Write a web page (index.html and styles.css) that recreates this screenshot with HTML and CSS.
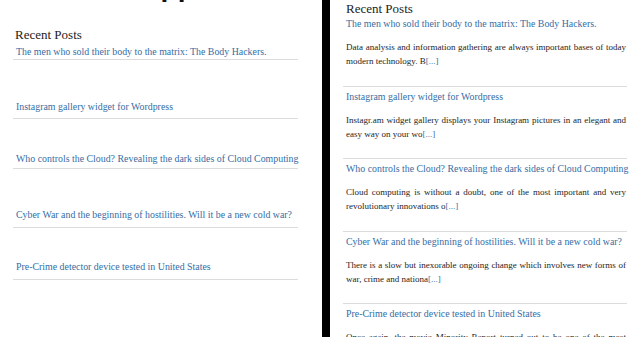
FILE: index.html
```html
<!DOCTYPE html>
<html>
<head>
<meta charset="utf-8">
<link rel="stylesheet" href="styles.css">
</head>
<body>
<div class="page">
  <section class="panel left">
    <h1 class="site-title">Web Apps</h1>
    <h2 class="widget-title">Recent Posts</h2>
    <ul class="posts compact">
      <li><a href="#">The men who sold their body to the matrix: The Body Hackers.</a></li>
      <li><a href="#">Instagram gallery widget for Wordpress</a></li>
      <li><a href="#">Who controls the Cloud? Revealing the dark sides of Cloud Computing</a></li>
      <li><a href="#">Cyber War and the beginning of hostilities. Will it be a new cold war?</a></li>
      <li><a href="#">Pre-Crime detector device tested in United States</a></li>
    </ul>
  </section>
  <div class="divider"></div>
  <section class="panel right">
    <h2 class="widget-title">Recent Posts</h2>
    <ul class="posts full">
      <li>
        <a href="#">The men who sold their body to the matrix: The Body Hackers.</a>
        <p class="excerpt">Data analysis and information gathering are always important bases of today modern technology. B<a href="#">[...]</a></p>
      </li>
      <li>
        <a href="#">Instagram gallery widget for Wordpress</a>
        <p class="excerpt">Instagr.am widget gallery displays your Instagram pictures in an elegant and easy way on your wo<a href="#">[...]</a></p>
      </li>
      <li>
        <a href="#">Who controls the Cloud? Revealing the dark sides of Cloud Computing</a>
        <p class="excerpt">Cloud computing is without a doubt, one of the most important and very revolutionary innovations o<a href="#">[...]</a></p>
      </li>
      <li>
        <a href="#">Cyber War and the beginning of hostilities. Will it be a new cold war?</a>
        <p class="excerpt">There is a slow but inexorable ongoing change which involves new forms of war, crime and nationa<a href="#">[...]</a></p>
      </li>
      <li>
        <a href="#">Pre-Crime detector device tested in United States</a>
        <p class="excerpt">Once again, the movie Minority Report turned out to be one of the most accurate predictions of the future<a href="#">[...]</a></p>
      </li>
    </ul>
  </section>
</div>
</body>
</html>
```

FILE: styles.css
```css
html, body {
  margin: 0;
  padding: 0;
  background: #fff;
}
body {
  width: 640px;
  height: 337px;
  overflow: hidden;
  font-family: "Liberation Serif", "Times New Roman", serif;
  color: #222;
}
.page {
  display: flex;
  height: 337px;
}
.panel {
  overflow: hidden;
}
.left {
  width: 322px;
  flex: none;
}
.divider {
  width: 8px;
  flex: none;
  background: #000;
}
.right {
  flex: 1;
  padding-left: 13px;
  padding-right: 10px;
}
.site-title {
  margin: -27px 0 0 0;
  padding-left: 75px;
  font-family: "Liberation Sans", Arial, sans-serif;
  font-weight: bold;
  font-size: 28px;
  line-height: 28px;
  color: #111;
}
.widget-title {
  margin: 0;
  font-weight: normal;
  font-size: 13px;
  line-height: 16px;
  color: #222;
  padding-left: 2px;
}
.left .widget-title {
  margin-top: 26px;
  padding-left: 15px;
}
.right .widget-title {
  padding-top: 1px;
  padding-left: 3px;
}
.posts {
  list-style: none;
  margin: 0;
  padding: 0;
}
.posts a {
  color: #366da4;
  text-decoration: none;
}
.posts li > a {
  display: block;
  font-size: 9.9px;
  line-height: 14px;
  white-space: nowrap;
}
.posts li {
  border-bottom: 1px solid #dcdcdc;
}
/* left, compact list */
.compact {
  margin: 2px 0 0 13px;
  width: 285px;
}
.compact li {
  padding-left: 3px;
}
.compact li:nth-child(1) { padding-top: 0; padding-bottom: 0; }
.compact li:nth-child(2) { padding-top: 40px; padding-bottom: 4px; }
.compact li:nth-child(3) { padding-top: 33px; padding-bottom: 2px; }
.compact li:nth-child(4) { padding-top: 39px; padding-bottom: 5px; }
.compact li:nth-child(5) { padding-top: 32px; padding-bottom: 5px; }
/* right, full list */
.full {
  width: 284px;
}
.full li {
  padding: 3px 0 0 3px;
}
.full li:first-child {
  padding-top: 0;
}
.excerpt {
  margin: 9px 0 0 0;
  padding-bottom: 17.5px;
  width: 280px;
  font-size: 9px;
  line-height: 14px;
  text-align: justify;
  color: #1e1e1e;
}
```
